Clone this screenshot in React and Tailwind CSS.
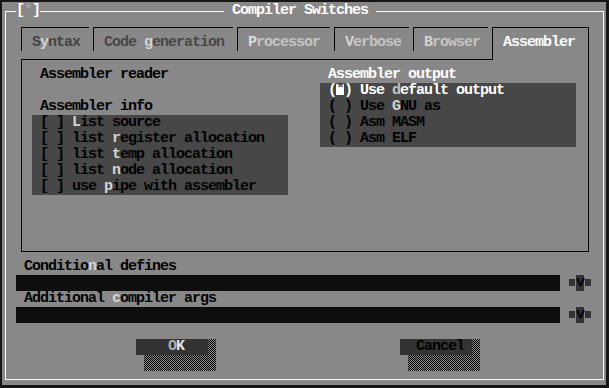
import React from "react";

const F =
  "font-['Liberation_Mono','DejaVu_Sans_Mono',monospace] font-bold text-[15px] leading-[16px] tracking-[-1px] whitespace-pre";

const CHECK =
  "bg-[image:repeating-conic-gradient(#000_0%_25%,#8a8a8a_0%_50%)] bg-[length:2px_2px]";

function Tab({ w, tall, last, children }) {
  return (
    <div
      className={`${w} ${tall ? "h-[32px]" : "h-[24px]"} border-l border-t border-black pt-[7px] pl-[10px] ${
        last ? "border-r" : ""
      }`}
    >
      <div className="h-[16px]">{children}</div>
    </div>
  );
}

function Row({ children, className = "" }) {
  return <div className={`h-[16px] ${className}`}>{children}</div>;
}

const HK = "text-[#d4d4d4]";

function History() {
  return (
    <div className="flex">
      <div className="w-[8px] h-[16px] pt-[4px] pl-[1px]">
        <div className="w-[6px] h-[7px] bg-[#333333]" />
      </div>
      <div className="w-[8px] h-[16px] bg-[#333333] text-black">v</div>
      <div className="w-[8px] h-[16px] pt-[4px] pl-[1px]">
        <div className="w-[6px] h-[7px] bg-[#333333]" />
      </div>
    </div>
  );
}

function Button({ children }) {
  return (
    <div className="flex flex-col">
      <div className="flex">
        <div className="w-[72px] h-[16px] bg-[#333333]">{children}</div>
        <div className={`w-[8px] h-[16px] ${CHECK}`} />
      </div>
      <div className={`ml-[8px] w-[72px] h-[16px] ${CHECK}`} />
    </div>
  );
}

export default function App() {
  return (
    <div className="w-[609px] h-[388px] bg-[#161616] pt-[2px] pl-[2px] overflow-hidden">
      <div className={`w-[604px] h-[383px] bg-[#888888] pt-[9px] pl-[3px] text-black ${F}`}>
        <div className="relative w-[599px] h-[369px] border border-white">
          {/* close box and title over the frame line */}
          <div className="absolute left-[10px] top-[-9px] w-[24px] h-[16px] bg-[#888888] text-white">
            [<span className="text-[#a4a4a4]">*</span>]
          </div>
          <div className="absolute left-[218px] top-[-9px] w-[152px] h-[16px] bg-[#888888] text-white">
            {" Compiler Switches "}
          </div>

          {/* tabs */}
          <div className="flex items-start gap-[4px] mt-[15px] ml-[15px]">
            <Tab w="w-[68px]">
              <span className="text-[#444444]">S</span>
              <span className={HK}>y</span>
              <span className="text-[#444444]">ntax</span>
            </Tab>
            <Tab w="w-[140px]">
              <span className="text-[#484848]">Code </span>
              <span className={HK}>g</span>
              <span className="text-[#484848]">eneration</span>
            </Tab>
            <Tab w="w-[93px]">
              <span className="text-[#dcdcdc]">P</span>
              <span className="text-[#c4c4c4]">rocessor</span>
            </Tab>
            <Tab w="w-[75px]">
              <span className="text-[#d4d4d4]">V</span>
              <span className="text-[#c4c4c4]">erbose</span>
            </Tab>
            <Tab w="w-[75px]">
              <span className="text-[#d4d4d4]">B</span>
              <span className="text-[#c4c4c4]">rowser</span>
            </Tab>
            <Tab w="w-[97px]" tall last>
              <span className="text-white">Assembler</span>
            </Tab>
          </div>

          {/* tab page */}
          <div className="ml-[15px] w-[568px] h-[193px] border-l border-r border-b border-black">
            <div className="w-[471px] h-[1px] bg-black" />
            <div className="flex mt-[7px]">
              <div className="w-[298px]">
                <Row className="pl-[18px]">Assembler reader</Row>
                <Row />
                <Row className="pl-[18px]">Assembler info</Row>
                <div className="ml-[10px] w-[256px] bg-[#474747] pl-[8px]">
                  <Row>
                    {"[ ] "}
                    <span className={HK}>L</span>
                    {"ist source"}
                  </Row>
                  <Row>
                    {"[ ] list "}
                    <span className={HK}>r</span>
                    {"egister allocation"}
                  </Row>
                  <Row>
                    {"[ ] list "}
                    <span className={HK}>t</span>
                    {"emp allocation"}
                  </Row>
                  <Row>
                    {"[ ] list "}
                    <span className={HK}>n</span>
                    {"ode allocation"}
                  </Row>
                  <Row>
                    {"[ ] use "}
                    <span className={HK}>p</span>
                    {"ipe with assembler"}
                  </Row>
                </div>
              </div>
              <div className="w-[256px]">
                <Row className="pl-[8px] text-white">Assembler output</Row>
                <div className="w-[256px] bg-[#474747] pl-[8px]">
                  <Row className="text-white flex">
                    <span>(</span>
                    <span className="inline-block w-[8px] h-[11px] mt-[1px] bg-white text-[#555555] leading-[11px]">*</span>
                    <span>{") Use "}</span>
                    <span className="text-[#c0c0c0]">d</span>
                    <span>efault output</span>
                  </Row>
                  <Row>
                    {"( ) Use "}
                    <span className={HK}>G</span>
                    {"NU as"}
                  </Row>
                  <Row>{"( ) Asm MASM"}</Row>
                  <Row>{"( ) Asm ELF"}</Row>
                </div>
              </div>
            </div>
          </div>

          {/* inputs */}
          <Row className="mt-[7px] pl-[18px]">
            {"Conditio"}
            <span className={HK}>n</span>
            {"al defines"}
          </Row>
          <div className="flex h-[16px] ml-[10px]">
            <div className="w-[544px] h-[16px] bg-[#0e0e0e]" />
            <div className="w-[8px]" />
            <History />
          </div>
          <Row className="pl-[18px]">
            {"Additional "}
            <span className={HK}>c</span>
            {"ompiler args"}
          </Row>
          <div className="flex h-[16px] ml-[10px]">
            <div className="w-[544px] h-[16px] bg-[#0e0e0e]" />
            <div className="w-[8px]" />
            <History />
          </div>
          <Row />

          {/* buttons */}
          <div className="flex ml-[130px]">
            <Button>
              {"    "}
              <span className="text-[#b0b0b0]">O</span>
              <span className="text-[#e4e4e4]">K</span>
            </Button>
            <div className="w-[184px]" />
            <Button>
              <span className="text-black">{"  Cancel"}</span>
            </Button>
          </div>
        </div>
      </div>
    </div>
  );
}
